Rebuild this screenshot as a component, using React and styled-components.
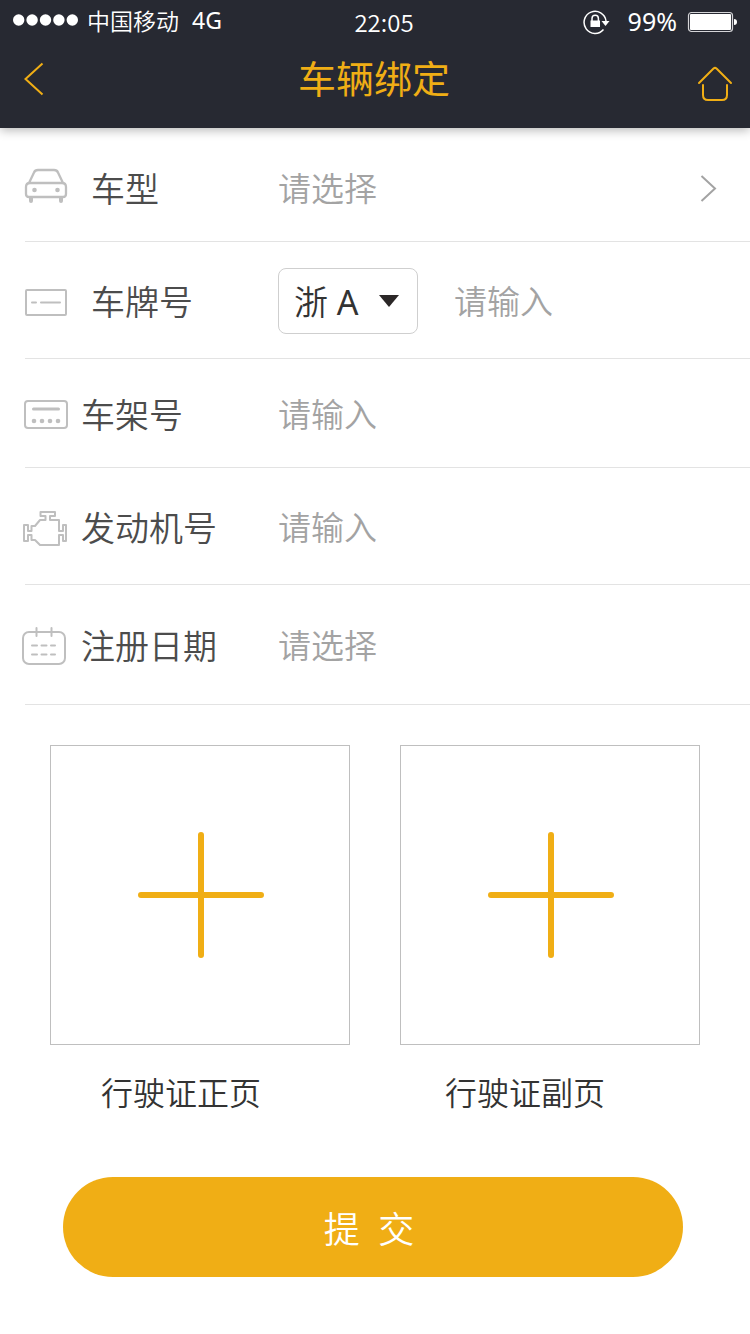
import React from "react";
import styled, { createGlobalStyle } from "styled-components";

const GlobalStyle = createGlobalStyle`
  *, *::before, *::after { box-sizing: border-box; }
  body {
    margin: 0;
    background: #fff;
    font-family: "Noto Sans CJK SC", "Noto Sans", sans-serif;
    font-weight: 350;
  }
  button, input, select { font: inherit; }
`;

const latinFirst = `"Noto Sans", "Noto Sans CJK SC DemiLight", "Noto Sans CJK SC", sans-serif`;

const Page = styled.div`
  display: flex;
  flex-direction: column;
`;

const Header = styled.header`
  background: #272932;
  box-shadow: 0 2px 10px rgba(0, 0, 0, 0.3);
`;

const StatusBar = styled.div`
  display: grid;
  grid-template-columns: 1fr auto 1fr;
  align-items: center;
  height: 44px;
  padding: 0 13px;
  color: #fff;
  font-size: 24px;
`;

const Carrier = styled.div`
  display: flex;
  align-items: center;
  gap: 9px;
  padding-bottom: 4px;
  font-size: 23px;
`;

const Network = styled.span`
  margin-left: 4px;
  font-family: ${latinFirst};
  font-size: 23px;
  font-weight: 400;
`;

const Clock = styled.time`
  padding: 0 0 2px 18px;
`;

const Power = styled.div`
  display: flex;
  align-items: center;
  justify-content: flex-end;
  gap: 10px;
`;

const Percent = styled.span`
  margin-left: 7px;
  padding-bottom: 2px;
  font-family: ${latinFirst};
  font-size: 25px;
  font-weight: 400;
`;

const NavBar = styled.div`
  display: grid;
  grid-template-columns: 46px 1fr 48px;
  align-items: center;
  height: 84px;
  padding: 0 11px 14px;
`;

const Title = styled.h1`
  margin: 0;
  padding-bottom: 4px;
  color: #f0ae15;
  font-size: 38px;
  font-weight: 400;
  line-height: 56px;
  text-align: center;
`;

const IconLink = styled.a`
  display: flex;
  justify-content: center;
  padding-top: ${(p) => p.$drop || 0}px;
`;

const Form = styled.form`
  display: flex;
  flex-direction: column;
  padding-top: 6px;
`;

const Row = styled.div`
  display: flex;
  align-items: center;
  height: ${(p) => p.$height}px;
  padding: 0 32px 0 22px;
`;

const Divider = styled.hr`
  width: auto;
  height: 1px;
  margin: -1px 0 0 25px;
  border: 0;
  background: #e3e3e3;
`;

const Label = styled.label`
  display: flex;
  align-items: center;
  gap: ${(p) => (p.$wide ? 23 : 13)}px;
  flex: 0 0 256px;
  color: #4c4c4c;
  font-size: 34px;
  line-height: 48px;
`;

const Field = styled.input`
  flex: 1;
  min-width: 0;
  height: 48px;
  padding: 0 0 2px;
  border: 0;
  outline: 0;
  background: transparent;
  color: #333;
  font-size: 33px;
  &::placeholder { color: #a3a3a3; opacity: 1; }
`;

const PlateBox = styled.div`
  display: grid;
  align-items: center;
  flex: 0 0 140px;
  margin-right: 36px;
  svg { grid-area: 1 / 1; justify-self: end; margin-right: 19px; pointer-events: none; }
`;

const PlateSelect = styled.select`
  grid-area: 1 / 1;
  width: 100%;
  height: 66px;
  padding: 2px 15px 0;
  border: 1px solid #cfcfcf;
  border-radius: 8px;
  appearance: none;
  background: #fff;
  color: #333;
  font-family: ${latinFirst};
  font-size: 34px;
  font-weight: 400;
`;

const Uploads = styled.div`
  display: grid;
  grid-template-columns: 1fr 1fr;
  gap: 50px;
  padding: 40px 50px 0;
`;

const Upload = styled.div`
  display: flex;
  flex-direction: column;
  align-items: center;
  gap: 22px;
`;

const UploadButton = styled.button`
  display: flex;
  align-items: center;
  justify-content: center;
  width: 100%;
  height: 300px;
  padding: 0 0 0 2px;
  border: 1px solid #bfbfbf;
  background: #fff;
`;

const Caption = styled.span`
  padding-right: ${(p) => p.$inset}px;
  color: #333;
  font-size: 32px;
  line-height: 48px;
`;

const Submit = styled.button`
  height: 100px;
  margin: 62px 67px 56px 63px;
  padding: 0 8px 0 0;
  border: 0;
  border-radius: 50px;
  background: #f0ae15;
  color: #fff;
  font-family: ${latinFirst};
  font-size: 36px;
  white-space: pre;
`;

const RowIcon = ({ top, children }) => (
  <svg width="46" height="46" viewBox={`22 ${top} 46 46`} fill="none" stroke="#bfbfbf" strokeWidth="2" strokeLinecap="round" strokeLinejoin="round" aria-hidden="true">
    {children}
  </svg>
);

const CarIcon = () => (
  <RowIcon top={165}>
    <path d="M29 183l5-10.500q1-2.500 4-2.500h16q3 0 4 2.500l5 10.500M30 183h32q4 0 4 4v7q0 3-3 3H29q-3 0-3-3v-7q0-4 4-4z" strokeWidth="2.300" />
    <path d="M31 198v3M61 198v3" strokeWidth="4" />
    <g fill="#bfbfbf" stroke="none"><circle cx="34.500" cy="190" r="2.300" /><circle cx="57.500" cy="190" r="2.300" /></g>
  </RowIcon>
);

const PlateIcon = () => (
  <RowIcon top={278}>
    <rect x="26" y="290" width="40" height="25" rx="1" />
    <path d="M32 302.500h4M41 302.500h19" />
  </RowIcon>
);

const FrameIcon = () => (
  <RowIcon top={391}>
    <rect x="25" y="401" width="42" height="27" rx="3" />
    <path d="M33.500 409h25" strokeWidth="3" />
    <g fill="#bfbfbf" stroke="none"><circle cx="34" cy="421" r="2.300" /><circle cx="42" cy="421" r="2.300" /><circle cx="50" cy="421" r="2.300" /><circle cx="58" cy="421" r="2.300" /></g>
  </RowIcon>
);

const EngineIcon = () => (
  <RowIcon top={504}>
    <path d="M24 525h4v6h3.500v-5H35l5-6h5.500v-4h-5v-4H55v4h-5v4h9v11h4v-6h3v16h-3v-6h-4v10H40l-5-5h-3.500v-5H28v6h-4z" />
  </RowIcon>
);

const CalendarIcon = () => (
  <RowIcon top={622}>
    <rect x="23" y="632" width="42" height="32" rx="6" />
    <path d="M36.500 628v8M51.500 628v8M32 645.500h5M41.500 645.500h5M51 645.500h4M32 654.500h5M41.500 654.500h5M51 654.500h4" />
  </RowIcon>
);

const PlusIcon = () => (
  <svg width="126" height="126" viewBox="0 0 126 126" stroke="#f0ae15" strokeWidth="6" strokeLinecap="round" aria-hidden="true">
    <path d="M63 3v120M3 63h120" />
  </svg>
);

const SignalDots = () => (
  <svg width="65" height="12" viewBox="0 0 65 12" fill="#fff" aria-hidden="true">
    {[0, 1, 2, 3, 4].map((i) => <circle key={i} cx={5.700 + i * 13.400} cy="6" r="5.700" />)}
  </svg>
);

const LockIcon = () => (
  <svg width="28" height="26" viewBox="583 9 28 26" fill="none" stroke="#fff" strokeWidth="1.500" aria-hidden="true">
    <path d="M603.500 29.500A11 11 0 1 1 606 21" />
    <path d="M601.500 21h8l-4 5z" fill="#fff" stroke="none" />
    <path d="M592 21v-2.500a3.200 3.200 0 0 1 6.400 0V21" />
    <rect x="590.500" y="20.500" width="9.500" height="6.500" fill="#fff" stroke="none" />
  </svg>
);

const BatteryIcon = () => (
  <svg width="50" height="22" viewBox="0 0 50 22" fill="none" aria-hidden="true">
    <rect x="1.500" y="1.500" width="44" height="19" rx="3" stroke="#d5d5d8" strokeWidth="1.200" />
    <rect x="3" y="3" width="41" height="16" rx="1" fill="#fff" />
    <path d="M47 8q3 0 3 3t-3 3z" fill="#fff" />
  </svg>
);

export default function App() {
  return (
    <Page>
      <GlobalStyle />
      <Header>
        <StatusBar>
          <Carrier><SignalDots /><span>中国移动</span><Network>4G</Network></Carrier>
          <Clock>22:05</Clock>
          <Power><LockIcon /><Percent>99%</Percent><BatteryIcon /></Power>
        </StatusBar>
        <NavBar>
          <IconLink href="#back" aria-label="返回">
            <svg width="20" height="34" viewBox="0 0 20 34" fill="none" stroke="#f0ae15" strokeWidth="2"><path d="M18.500 1.500L1.500 17l17 15.500" /></svg>
          </IconLink>
          <Title>车辆绑定</Title>
          <IconLink href="#home" aria-label="首页" $drop={10}>
            <svg width="36" height="36" viewBox="697 66 36 36" fill="none" stroke="#f0ae15" strokeWidth="2" strokeLinecap="round" strokeLinejoin="round"><path d="M699 83l14.500-14.500q1.500-1.200 3 0L731 83M703 85v10q0 5 5 5h14q5 0 5-5V85" /></svg>
          </IconLink>
        </NavBar>
      </Header>
      <Form onSubmit={(e) => e.preventDefault()}>
        <Row $height={108}>
          <Label htmlFor="model" $wide><CarIcon />车型</Label>
          <Field id="model" placeholder="请选择" readOnly />
          <svg width="18" height="28" viewBox="0 0 18 28" fill="none" stroke="#a3a3a3" strokeWidth="2" aria-hidden="true"><path d="M1.500 2L15 14.500 1.500 27" /></svg>
        </Row>
        <Divider />
        <Row $height={117}>
          <Label htmlFor="plate" $wide><PlateIcon />车牌号</Label>
          <PlateBox>
            <PlateSelect aria-label="车牌地区" defaultValue="浙 A"><option>浙 A</option></PlateSelect>
            <svg width="20" height="12" viewBox="0 0 20 12" fill="#2b2727" aria-hidden="true"><path d="M0 0h20L10 12z" /></svg>
          </PlateBox>
          <Field id="plate" placeholder="请输入" />
        </Row>
        <Divider />
        <Row $height={109}>
          <Label htmlFor="frame"><FrameIcon />车架号</Label>
          <Field id="frame" placeholder="请输入" />
        </Row>
        <Divider />
        <Row $height={117}>
          <Label htmlFor="engine"><EngineIcon />发动机号</Label>
          <Field id="engine" placeholder="请输入" />
        </Row>
        <Divider />
        <Row $height={120}>
          <Label htmlFor="date"><CalendarIcon />注册日期</Label>
          <Field id="date" placeholder="请选择" readOnly />
        </Row>
        <Divider />
        <Uploads>
          <Upload>
            <UploadButton type="button" aria-labelledby="front"><PlusIcon /></UploadButton>
            <Caption id="front" $inset={38}>行驶证正页</Caption>
          </Upload>
          <Upload>
            <UploadButton type="button" aria-labelledby="back"><PlusIcon /></UploadButton>
            <Caption id="back" $inset={50}>行驶证副页</Caption>
          </Upload>
        </Uploads>
        <Submit type="submit">{"提  交"}</Submit>
      </Form>
    </Page>
  );
}
